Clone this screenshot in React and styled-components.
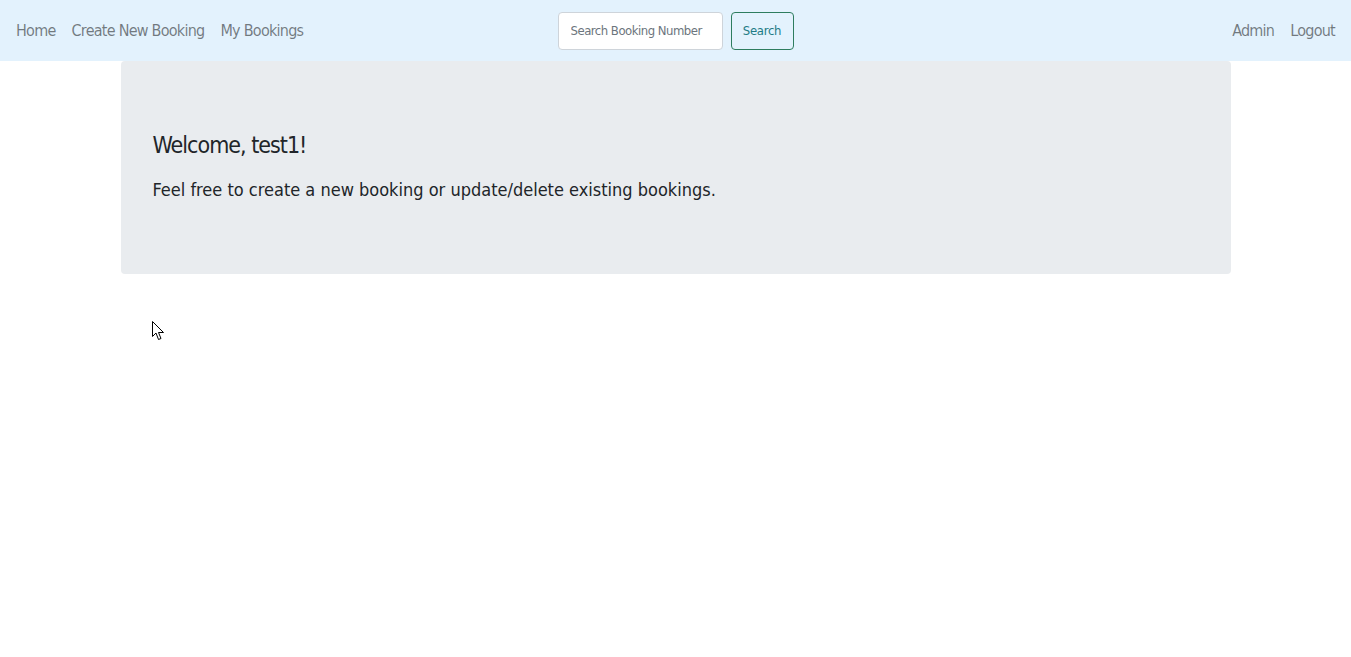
import React from "react";
import styled, { createGlobalStyle } from "styled-components";

const GlobalStyle = createGlobalStyle`
  body {
    margin: 0;
    background: #ffffff;
    font-family: "DejaVu Sans Condensed", "DejaVu Sans", sans-serif;
    font-stretch: condensed;
    color: #212529;
  }
  * {
    box-sizing: border-box;
  }
`;

const Navbar = styled.nav`
  height: 61px;
  background: #e3f2fd;
  display: grid;
  grid-template-columns: 1fr auto 1fr;
  align-items: center;
  padding: 0 8px;
`;

const NavGroup = styled.div`
  display: flex;
  align-items: center;
  justify-content: ${(p) => (p.$end ? "flex-end" : "flex-start")};
`;

const NavLink = styled.a`
  padding: 0 8px;
  font-size: 16px;
  letter-spacing: -0.75px;
  color: rgba(0, 0, 0, 0.5);
  text-decoration: none;
  cursor: pointer;
`;

const SearchForm = styled.form`
  display: flex;
  align-items: center;
  gap: 8px;
`;

const SearchInput = styled.input`
  width: 165px;
  height: 38px;
  padding: 0 12px;
  border: 1px solid #ced4da;
  border-radius: 4px;
  background: #ffffff;
  font-family: inherit;
  font-stretch: condensed;
  font-size: 13px;
  letter-spacing: -0.5px;
  color: #495057;
  outline: none;

  &::placeholder {
    color: #6c757d;
  }
`;

const SearchButton = styled.button`
  width: 63px;
  height: 38px;
  padding: 0;
  border: 1px solid #2e7d5f;
  border-radius: 4px;
  background: transparent;
  font-family: inherit;
  font-stretch: condensed;
  font-size: 13px;
  letter-spacing: -0.3px;
  color: #1f7c86;
  cursor: pointer;
`;

const Container = styled.main`
  width: 1110px;
  margin: 0 auto;
`;

const Jumbotron = styled.section`
  height: 213px;
  background: #e9ecef;
  border-radius: 4px;
  padding: 0 32px 4px;
  display: flex;
  flex-direction: column;
  justify-content: center;
  gap: 12px;
`;

const Heading = styled.h1`
  margin: 0;
  font-size: 23px;
  font-weight: 400;
  line-height: 36px;
  letter-spacing: -1px;
`;

const Lead = styled.p`
  margin: 0;
  font-size: 18px;
  font-weight: 400;
  line-height: 30px;
`;

const Pointer = styled.svg`
  position: absolute;
  left: 152px;
  top: 321px;
`;

export default function App() {
  return (
    <>
      <GlobalStyle />
      <Navbar>
        <NavGroup>
          <NavLink>Home</NavLink>
          <NavLink>Create New Booking</NavLink>
          <NavLink>My Bookings</NavLink>
        </NavGroup>
        <SearchForm onSubmit={(e) => e.preventDefault()}>
          <SearchInput placeholder="Search Booking Number" />
          <SearchButton type="submit">Search</SearchButton>
        </SearchForm>
        <NavGroup $end>
          <NavLink>Admin</NavLink>
          <NavLink>Logout</NavLink>
        </NavGroup>
      </Navbar>
      <Container>
        <Jumbotron>
          <Heading>Welcome, test1!</Heading>
          <Lead>Feel free to create a new booking or update/delete existing bookings.</Lead>
        </Jumbotron>
      </Container>
      <Pointer width="13" height="20" viewBox="0 0 13 20">
        <path
          d="M0.5 0.5 L0.5 15.5 L4 12 L6.5 18.5 L9 17.5 L6.5 11.5 L11.5 11.5 Z"
          fill="#ffffff"
          stroke="#000000"
          strokeWidth="1"
          strokeLinejoin="miter"
        />
      </Pointer>
    </>
  );
}
